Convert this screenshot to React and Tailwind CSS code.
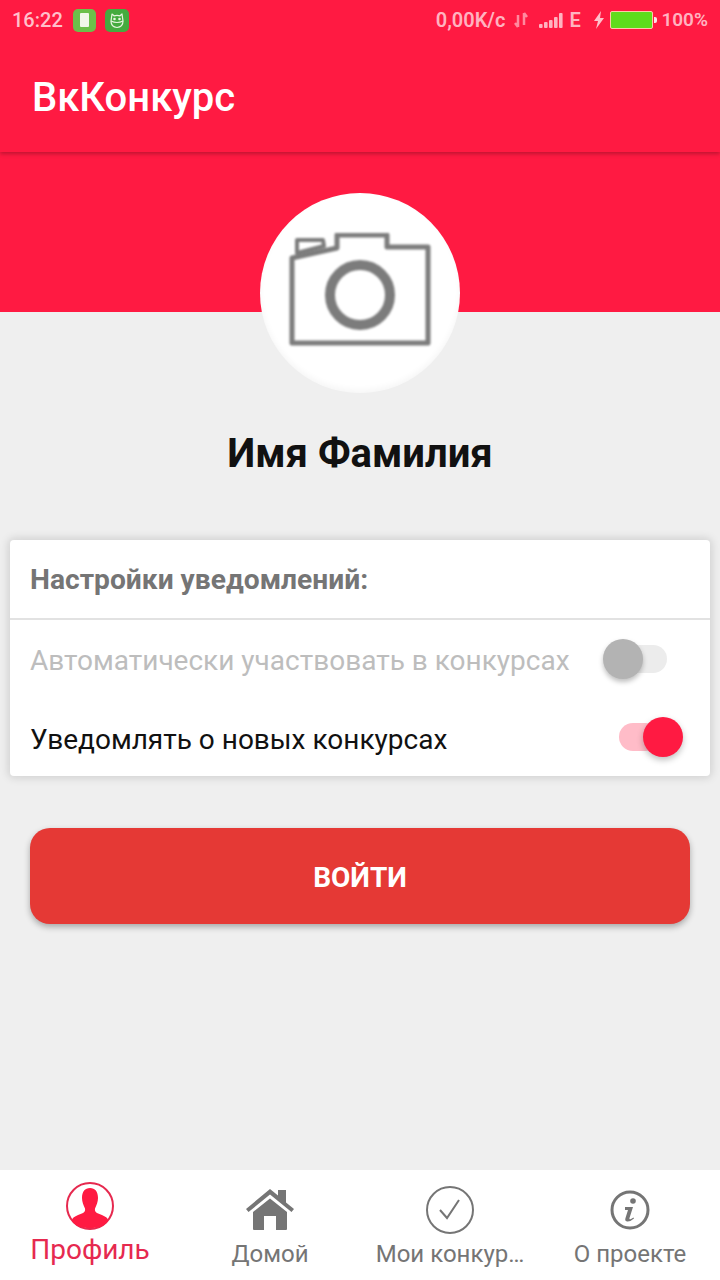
import React from "react";

function Switch({ on }) {
  return on ? (
    <div className="relative w-[64px] h-[40px] shrink-0">
      <div className="absolute left-0 top-[6px] w-[40px] h-[28px] rounded-full bg-[#ffbcc8]" />
      <div className="absolute left-[24px] top-0 w-[40px] h-[40px] rounded-full bg-[#ff1a42] shadow-[0_3px_6px_rgba(0,0,0,0.25)]" />
    </div>
  ) : (
    <div className="relative w-[64px] h-[40px] shrink-0">
      <div className="absolute left-[12px] top-[6px] w-[52px] h-[28px] rounded-full bg-[#ececec]" />
      <div className="absolute left-0 top-0 w-[40px] h-[40px] rounded-full bg-[#b3b3b3] shadow-[0_3px_5px_rgba(0,0,0,0.25)]" />
    </div>
  );
}

function StatusBar() {
  return (
    <div className="h-[40px] flex items-center justify-between pl-[12px] pr-[12px] text-[#ffb3c0] text-[19px] font-medium">
      <div className="flex items-center">
        <span className="w-[52px] text-[20px] text-[#ffc0cb]">16:22</span>
        <div className="ml-[9px] w-[23px] h-[23px] rounded-[5px] bg-[#6cc04a] flex items-center justify-center">
          <div className="w-[9px] h-[14px] bg-[#f2f7ea] rounded-[1px]" />
        </div>
        <div className="ml-[9px] w-[24px] h-[23px] rounded-[5px] bg-[#45ab3f] flex items-center justify-center">
          <svg width="18" height="17" viewBox="0 0 18 17" fill="none" stroke="#e8f5e0" strokeWidth="1.200" strokeLinejoin="round">
            <path d="M4 2 L6 3.800 Q9 3 12 3.800 L14 2 L15 9 Q15 15 9 15.500 Q3 15 3 9 Z" />
            <path d="M3 9 Q9 12 15 9" />
            <circle cx="6.500" cy="7" r=".7" />
            <circle cx="11.500" cy="7" r=".7" />
          </svg>
        </div>
      </div>
      <div className="flex items-center">
        <span className="text-[20px] font-semibold">0,00K/c</span>
        <svg className="ml-[8px]" width="16" height="18" viewBox="0 0 16 18" fill="none" stroke="#ff8a9f" strokeWidth="2.500">
          <path d="M5 16V4M2 12l3 4M11 2v12M11 2l3 4" />
        </svg>
        <svg className="ml-[10px]" width="24" height="17" viewBox="0 0 24 17" fill="#ffb3c0">
          <rect x="0" y="12" width="3.600" height="4" rx="1" />
          <rect x="5" y="10" width="3.600" height="6" rx="1" />
          <rect x="10" y="8" width="3.600" height="8" rx="1" />
          <rect x="15" y="5" width="3.600" height="11" rx="1" />
          <rect x="20" y="1" width="3.600" height="15" rx="1" />
        </svg>
        <span className="ml-[6px] w-[12px] text-[20px] font-semibold">E</span>
        <svg className="ml-[12px]" width="12" height="18" viewBox="0 0 12 18" fill="#ffc0cb">
          <path d="M8 0 L1 10 H5 L3 18 L11 7 H7 Z" />
        </svg>
        <div className="ml-[5px] w-[43px] h-[18px] rounded-[2px] border border-[#ffc9a8] bg-[#5fdc1c]" />
        <div className="ml-[1px] w-[3px] h-[6px] rounded-r-[2px] bg-[#ffe0e6]" />
        <span className="ml-[4px] font-semibold">100%</span>
      </div>
    </div>
  );
}

function NavItem({ icon, label, active, className }) {
  return (
    <div className={`flex flex-col items-center ${className}`}>
      <div className="h-[50px] flex items-center justify-center">{icon}</div>
      <span className={active ? "mt-[3px] text-[28px] leading-[32px] text-[#e6294f]" : "mt-[4px] text-[24px] leading-[30px] text-[#757575] whitespace-nowrap"}>
        {label}
      </span>
    </div>
  );
}

export default function App() {
  return (
    <div
      className="w-[720px] h-[1280px] bg-[#efefef] flex flex-col overflow-hidden"
      style={{ fontFamily: 'Roboto, "Noto Sans", sans-serif' }}
    >
      <div className="bg-[#ff1a42] h-[152px] shadow-[0_2px_4px_rgba(0,0,0,0.25)] relative z-10">
        <StatusBar />
        <div className="pl-[32px] pt-[35px] text-[40px] leading-[46px] font-medium text-white">ВкКонкурс</div>
      </div>
      <div className="bg-[#ff1a42] h-[160px] flex justify-center pt-[41px] shrink-0">
        <div className="w-[200px] h-[200px] rounded-full bg-white shadow-[inset_0_-3px_6px_rgba(0,0,0,0.04)] shrink-0 flex items-center justify-center">
          <svg className="blur-[1px]" width="146" height="120" viewBox="0 0 146 120" fill="none" stroke="#7c7c7c" strokeWidth="5" strokeLinejoin="round">
            <path d="M5 110 V25 L50 15 V2 H100 V14 H141 V110 Z" />
            <path d="M10 20 V7 H36 L37 13 Z" strokeWidth="4" />
            <circle cx="73" cy="62" r="30" strokeWidth="10" />
          </svg>
        </div>
      </div>
      <div className="flex-1 flex flex-col">
        <div className="mt-[118px] text-center text-[40px] leading-[48px] font-bold text-[#111111]">Имя Фамилия</div>
        <div className="mt-[62px] mx-[10px] h-[236px] bg-white rounded-[4px] shadow-[0_0_9px_2px_rgba(0,0,0,0.13)] flex flex-col">
          <div className="h-[80px] border-b-2 border-[#e2e2e2] pl-[20px] pt-[3px] flex items-center text-[28.2px] font-bold text-[#757575]">
            Настройки уведомлений:
          </div>
          <div className="h-[78px] flex items-center justify-between pl-[20px] pr-[43px] text-[28px] text-[#bdbdbd]">
            <span className="pt-[4px]">Автоматически участвовать в конкурсах</span>
            <Switch />
          </div>
          <div className="h-[78px] flex items-center justify-between pl-[20px] pr-[27px] text-[28px] text-[#111111]">
            <span className="pt-[5px]">Уведомлять о новых конкурсах</span>
            <Switch on />
          </div>
        </div>
        <button className="mt-[52px] mx-[30px] h-[96px] pt-[3px] rounded-[20px] bg-[#e53935] text-white text-[28px] font-bold shadow-[0_3px_6px_rgba(0,0,0,0.3)]">
          ВОЙТИ
        </button>
      </div>
      <div className="h-[110px] bg-white shrink-0 grid grid-cols-[180px_180px_180px_180px]">
        <NavItem
          active
          label="Профиль"
          className="pt-[11px]"
          icon={
            <svg width="50" height="50" viewBox="0 0 50 50">
              <circle cx="25" cy="25" r="23" fill="none" stroke="#e6294f" strokeWidth="2" />
              <path fill="#ff1a42" d="M25 7c-5 0-8 3.500-8 10 0 4 1.500 7 3 10.500 .5 2-.5 3.500-2 4.500-3 1.500-7 2.500-9.500 4.500-1 1-1.500 2-1.500 3.500 3.500 5 9 7 18 7s14.500-2 18-7c0-1.500-.5-2.500-1.500-3.500-2.500-2-6.500-3-9.500-4.500-1.500-1-2.500-2.500-2-4.500 1.500-3.500 3-6.500 3-10.500 0-6.500-3-10-8-10z" />
            </svg>
          }
        />
        <NavItem
          label="Домой"
          className="pt-[15px]"
          icon={
            <svg width="50" height="42" viewBox="0 0 50 42" fill="#757575">
              <path d="M25 0 L33 6.500 V1 H41 V13.500 L49 20 L46.500 23 L25 5.500 L3.500 23 L1 20 Z" />
              <path d="M25 9.500 L42 23 V40 Q42 41 41 41 H31 V27 H19 V41 H9 Q8 41 8 40 V23 Z" />
            </svg>
          }
        />
        <NavItem
          label="Мои конкур…"
          className="pt-[15px]"
          icon={
            <svg width="48" height="48" viewBox="0 0 48 48" fill="none" stroke="#757575">
              <circle cx="24" cy="24" r="23" strokeWidth="2" />
              <path d="M14 24 L21 32 L33 14" strokeWidth="2" />
            </svg>
          }
        />
        <NavItem
          label="О проекте"
          className="pt-[15px]"
          icon={
            <svg width="40" height="40" viewBox="0 0 40 40">
              <circle cx="20" cy="20" r="18" fill="none" stroke="#757575" strokeWidth="3" />
              <circle cx="23" cy="11" r="2.800" fill="#757575" />
              <path fill="#757575" d="M15 17 H23 L19.500 28 Q19 30 21 29 L23.500 27.500 L24 28.500 Q20 32 17 31.500 Q14.500 31 15.500 28 L18 20 L15 20 Z" />
            </svg>
          }
        />
      </div>
    </div>
  );
}
